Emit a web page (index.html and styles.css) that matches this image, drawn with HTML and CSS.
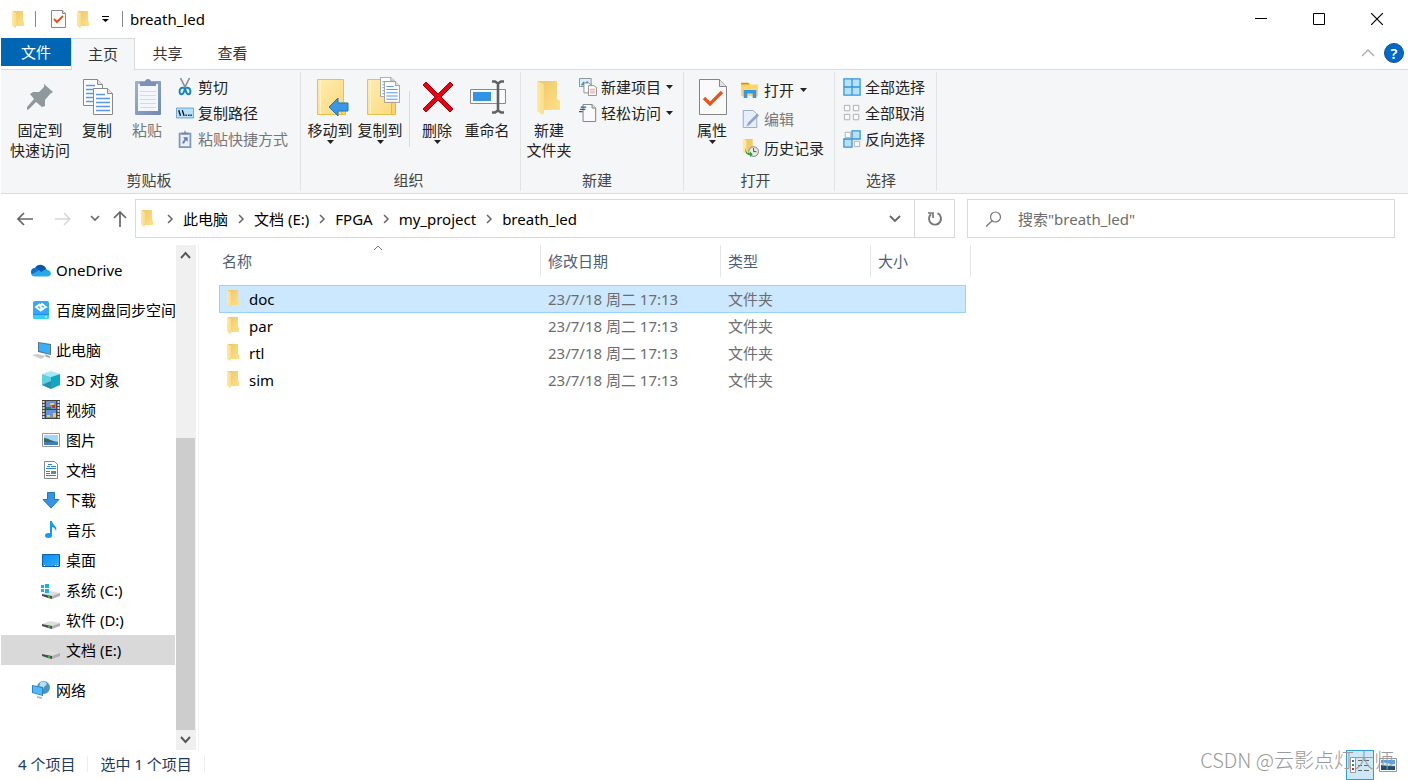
FILE: index.html
```html
<!DOCTYPE html>
<html lang="zh-CN">
<head>
<meta charset="utf-8">
<title>breath_led</title>
<link rel="stylesheet" href="styles.css">
</head>
<body>
<svg class="defs" aria-hidden="true">
  <defs>
    <linearGradient id="gFront" x1="0" x2="1"><stop offset="0" stop-color="#ffe9a6"/><stop offset="1" stop-color="#fbdc86"/></linearGradient>
    <linearGradient id="gBack" x1="0" x2="1" y2="1"><stop offset="0" stop-color="#eec766"/><stop offset="1" stop-color="#ffe08a"/></linearGradient>
    <linearGradient id="gSky" x1="0" x2="1" y2="1"><stop offset="0" stop-color="#0d8bf0"/><stop offset="1" stop-color="#31b1ff"/></linearGradient>
    <linearGradient id="gBook" x1="0" x2="1" y2="1"><stop offset="0" stop-color="#ffedb0"/><stop offset="1" stop-color="#fbd97c"/></linearGradient>
    <linearGradient id="gClip" x1="0" x2="1" y2="1"><stop offset="0" stop-color="#9fb2d3"/><stop offset="1" stop-color="#7288b0"/></linearGradient>
  </defs>
  <symbol id="folder" viewBox="0 0 13 17">
    <path d="M1 0h10v10l1 1v4H2z" fill="url(#gBack)"/>
    <path d="M0 0l4 2v14l-1 1-3-2z" fill="url(#gFront)"/>
  </symbol>
  <symbol id="check" viewBox="0 0 16 20">
    <path d="M.5 1.500h11l3 3v14H.5z" fill="#fafafa" stroke="#8a8a8a"/>
    <path d="M11.500 1.500v3h3" fill="#ddd" stroke="#8a8a8a"/>
    <path d="M3 10l3 3 6-6" fill="none" stroke="#e8541a" stroke-width="2"/>
  </symbol>
  <symbol id="crumb" viewBox="0 0 8 10"><path d="M2 1l4 4-4 4" fill="none" stroke="#666" stroke-width="1.500"/></symbol>
  <symbol id="caret" viewBox="0 0 7 4"><path d="M0 0h7L3.500 4z" fill="#222"/></symbol>
  <symbol id="drive" viewBox="0 0 20 20">
    <path d="M1 14l8-3 10 2-8 3z" fill="#dedede"/>
    <path d="M1 14l10 2v3l-4-1-6-2z" fill="#4d4d4d"/>
    <path d="M11 16l8-3v3l-8 3z" fill="#b0b0b0"/>
    <path d="M7 16l2 .5v1.500l-2-.5z" fill="#2be02b"/>
  </symbol>
  <symbol id="sheet" viewBox="0 0 20 27">
    <path d="M.5.5h14l5 5v21H.5z" fill="#fdfdfd" stroke="#888"/>
    <path d="M14.500.5v5h5" fill="#e6e6e6" stroke="#888"/>
    <path d="M3 6.500h9M3 10.500h14M3 14.500h14M3 18.500h14M3 22.500h14" stroke="#5a98ee" stroke-width="1.300"/>
  </symbol>
  <symbol id="book" viewBox="0 0 30 38">
    <path d="M1.500 1.500h26v35h-26z" fill="url(#gBook)" stroke="#e8c04c"/>
    <path d="M4.500 2v34" stroke="#fff3c4"/>
    <path d="M25.500 36.500v-11l2-2 2 2v11z" fill="#f9d467" stroke="#e8b93c"/>
  </symbol>
</svg>

<div class="window">
  <header class="titlebar">
    <svg class="folder-icon" viewBox="0 0 13 17"><use href="#folder"/></svg>
    <span class="bar"></span>
    <button class="quick" aria-label="属性"><svg width="16" height="20"><use href="#check"/></svg></button>
    <button class="quick" aria-label="新建文件夹"><svg class="folder-icon"><use href="#folder"/></svg></button>
    <button class="quick customize" aria-label="自定义"><svg width="7" height="7" viewBox="0 0 7 7"><path d="M0 0h7v1H0zM0 3h7L3.500 6z"/></svg></button>
    <span class="bar"></span>
    <h1 class="title">breath_led</h1>
    <div class="window-buttons">
      <button aria-label="最小化"><svg width="12" height="12"><path d="M0 5.500h12" stroke="#000"/></svg></button>
      <button aria-label="最大化"><svg width="12" height="12"><path d="M.5.5h11v11H.5z" fill="none" stroke="#000"/></svg></button>
      <button aria-label="关闭"><svg width="12" height="12"><path d="M0 0l12 12M12 0L0 12" stroke="#000" stroke-width="1.200"/></svg></button>
    </div>
  </header>

  <nav class="tabs">
    <button class="tab file">文件</button>
    <button class="tab active">主页</button>
    <button class="tab">共享</button>
    <button class="tab">查看</button>
    <div class="tab-tools">
      <button aria-label="折叠功能区"><svg width="14" height="8"><path d="M1 7l6-6 6 6" fill="none" stroke="#aaa" stroke-width="1.300"/></svg></button>
      <button class="help" aria-label="帮助">?</button>
    </div>
  </nav>

  <section class="ribbon">
    <div class="group clipboard">
      <div class="tools">
        <button class="big pin">
          <svg class="big-icon" viewBox="0 0 40 40"><path d="M24 7l9 8-3 2-5 6 0 6-3 1-6-5-7 7-2 1 0-3 7-8-4-5 3-2 6 0 5-5z" fill="#8f989d"/></svg>
          <span>固定到<br>快速访问</span>
        </button>
        <button class="big">
          <svg class="big-icon" viewBox="0 0 40 40"><use href="#sheet" x="6" y="2" width="20" height="27"/><use href="#sheet" x="16" y="11" width="20" height="27"/></svg>
          <span>复制</span>
        </button>
        <button class="big" disabled>
          <svg class="big-icon" viewBox="0 0 40 40"><rect x="8" y="4" width="26" height="34" rx="1" fill="url(#gClip)"/><path d="M11 7h20v27H11z" fill="#f3f7fd"/><path d="M13 14.500h16M13 18.500h16M13 22.500h16M13 26.500h16M13 30.500h16" stroke="#cbdcf2"/><path d="M13 5h5c0-4 6-4 6 0h5v4H13z" fill="#7c91b8"/></svg>
          <span>粘贴</span>
        </button>
        <div class="small-list">
          <button class="small"><svg class="small-icon" viewBox="0 0 20 20"><path d="M5 0l6 12M15 0L9 12" stroke="#8b8f94" stroke-width="1.800"/><path d="M9 11c-4-1-5 2-5 4s1 3 2 3c3 0 3-3 4-7 1 4 1 7 4 7 1 0 2-1 2-3s-1-5-5-4" fill="none" stroke="#1684cb" stroke-width="2.200"/></svg>剪切</button>
          <button class="small"><svg class="small-icon" viewBox="0 0 20 20"><path d="M.5 4.500h19v11H.5z" fill="#b4e1fa" stroke="#5c9fcd"/><path d="M3 7l2 6M7 7l2 6M10.500 12.500H12M13.500 12.500H15M16 12.500h1.500" stroke="#111" stroke-width="1.500"/></svg>复制路径</button>
          <button class="small" disabled><svg class="small-icon" viewBox="0 0 20 20"><path d="M3 3h14v17H3z" fill="#8297bd"/><path d="M5 5h10v13H5z" fill="#eaf1fb"/><path d="M6 3h3l1-3 1 3h3v2H6z" fill="#7086ae"/><path d="M8 8h5v5l-2-1.500L9 15H7c0-2 1-3 2.500-4.500z" fill="#5f7fae"/></svg>粘贴快捷方式</button>
        </div>
      </div>
      <div class="group-label">剪贴板</div>
    </div>

    <div class="group organize">
      <div class="tools">
        <button class="big"><svg class="big-icon" viewBox="0 0 40 40"><use href="#book" x="6" y="1" width="30" height="38"/><path d="M19 30l9-9v5h10v8H28v5z" fill="#3a97e6" stroke="#1c76c2"/></svg><span>移动到</span><svg class="caret"><use href="#caret"/></svg></button>
        <button class="big"><svg class="big-icon" viewBox="0 0 40 40"><use href="#book" x="6" y="1" width="30" height="38"/><use href="#sheet" x="20" y="0" width="15" height="20"/><use href="#sheet" x="24" y="4" width="16" height="22"/></svg><span>复制到</span><svg class="caret"><use href="#caret"/></svg></button>
        <span class="divider"></span>
        <button class="big"><svg class="big-icon" viewBox="0 0 40 40"><path d="M6 8l3-3 12 12L33 5l3 3-12 12 12 12-3 3-12-12L9 35l-3-3 12-12z" fill="#e8000e" stroke="#b1000b"/></svg><span>删除</span><svg class="caret"><use href="#caret"/></svg></button>
        <button class="big"><svg class="big-icon" viewBox="0 0 40 40"><path d="M3.500 12.500h35v14h-35z" fill="#fafafa" stroke="#8b8b8b"/><path d="M6 15h18v9H6z" fill="#3393e6"/><path d="M25 4.500h3l3 2 3-2h3M25 35.500h3l3-2 3 2h3M31 6v28" fill="none" stroke="#616161" stroke-width="2.600"/></svg><span>重命名</span></button>
      </div>
      <div class="group-label">组织</div>
    </div>

    <div class="group create">
      <div class="tools">
        <button class="big wide"><svg class="big-icon" viewBox="0 0 40 40"><path d="M9 4h19v18l3 2v9H12z" fill="url(#gBack)"/><path d="M8 4l7 3v28l-1 3-6-4z" fill="url(#gFront)"/></svg><span>新建<br>文件夹</span></button>
        <div class="small-list">
          <button class="small"><svg class="small-icon" viewBox="0 0 20 20"><path d="M.5.5h13v9H.5z" fill="#d9f0fc" stroke="#7d8a92"/><path d="M2 8l3-4 2 2 2-3 3 5z" fill="#318ccb"/><path d="M5.500 5.500h5l3 2v9h-8z" fill="#fff" stroke="#888"/><path d="M10.500 8.500h6l3 2v9h-9z" fill="#fff" stroke="#888"/><path d="M12 12.500h6M12 14.500h6M12 16.500h6" stroke="#ef9292"/></svg>新建项目<svg class="caret inline"><use href="#caret"/></svg></button>
          <button class="small"><svg class="small-icon" viewBox="0 0 20 20"><path d="M4.500.5h10l4 4v15h-14z" fill="#fafafa" stroke="#777"/><path d="M14.500.5v4h4" fill="#e6e6e6" stroke="#777"/><path d="M2 3.500h6M1 6h6M0 8.500h4" stroke="#1267b1" stroke-width="1.300"/></svg>轻松访问<svg class="caret inline"><use href="#caret"/></svg></button>
        </div>
      </div>
      <div class="group-label">新建</div>
    </div>

    <div class="group open">
      <div class="tools">
        <button class="big"><svg class="big-icon" viewBox="0 0 40 40"><path d="M7.500 2.500h20l7 7v28h-27z" fill="#fafafa" stroke="#858585"/><path d="M27.500 2.500v7h7" fill="#e2e2e2" stroke="#858585"/><path d="M12 21l6 6 12-12" fill="none" stroke="#e8541a" stroke-width="3.200"/></svg><span>属性</span><svg class="caret"><use href="#caret"/></svg></button>
        <div class="small-list loose">
          <button class="small"><svg class="small-icon" viewBox="0 0 20 20"><path d="M0 3h9l1 1h9v13H0z" fill="#ffd66a"/><path d="M0 2h8l2 2H0z" fill="#d9920a"/><path d="M3 19v-9h14v9h-4v-5H7v5z" fill="#3298e8"/></svg>打开<svg class="caret inline"><use href="#caret"/></svg></button>
          <button class="small" disabled><svg class="small-icon" viewBox="0 0 20 20"><path d="M2.500.5h11l4 4v15h-15z" fill="#e5eefa" stroke="#92a5c4"/><path d="M18 4L8 14l-2 4 3-1L20 6z" fill="#8fa5c8"/></svg>编辑</button>
          <button class="small"><svg class="small-icon" viewBox="0 0 20 20"><path d="M4 0h9v14H4z" fill="#f1cb68"/><path d="M2 0l4 2v15l-4-2z" fill="#ffe9a0"/><circle cx="14" cy="14" r="5.400" fill="#e8e8e8" stroke="#777"/><path d="M14 10v4h3" fill="none" stroke="#444"/><path d="M5 10c0 4 2 6 5 6v-2l3 3-3 3v-2c-4 0-6-4-5-8z" fill="#27a02d"/></svg>历史记录</button>
        </div>
      </div>
      <div class="group-label">打开</div>
    </div>

    <div class="group select">
      <div class="tools">
        <div class="small-list">
          <button class="small"><svg class="small-icon" viewBox="0 0 20 20"><g fill="#b7e1fb" stroke="#2f95df" stroke-width="1.400"><path d="M1 1h9v9H1zM10 1h9v9h-9zM1 10h9v9H1zM10 10h9v9h-9z"/></g></svg>全部选择</button>
          <button class="small"><svg class="small-icon" viewBox="0 0 20 20"><path d="M1.500 1.500h6v6h-6zM11.500 1.500h6v6h-6zM1.500 11.500h6v6h-6zM11.500 11.500h6v6h-6z" fill="#fafafa" stroke="#aaa"/></svg>全部取消</button>
          <button class="small"><svg class="small-icon" viewBox="0 0 20 20"><path d="M2.500 2.500h6v6h-6zM12.500 12.500h6v6h-6z" fill="#fafafa" stroke="#aaa"/><path d="M10 1h9v9h-9zM1 10h9v9H1z" fill="#b7e1fb" stroke="#2f95df" stroke-width="1.400"/></svg>反向选择</button>
        </div>
      </div>
      <div class="group-label">选择</div>
    </div>
  </section>

  <div class="navbar">
    <div class="history">
      <button aria-label="后退"><svg width="16" height="14"><path d="M1 7h15M7 1L1 7l6 6" fill="none" stroke="#666" stroke-width="1.700"/></svg></button>
      <button aria-label="前进"><svg width="16" height="14"><path d="M0 7h15M9 1l6 6-6 6" fill="none" stroke="#d6d6d6" stroke-width="1.500"/></svg></button>
      <button class="narrow" aria-label="最近"><svg width="10" height="7"><path d="M1 1l4 4 4-4" fill="none" stroke="#666" stroke-width="1.600"/></svg></button>
      <button class="narrow" aria-label="上移"><svg width="14" height="16"><path d="M7 1v15M1 7l6-6 6 6" fill="none" stroke="#666" stroke-width="1.700"/></svg></button>
    </div>
    <div class="address">
      <svg class="folder-icon"><use href="#folder"/></svg>
      <svg class="crumb"><use href="#crumb"/></svg><a href="#">此电脑</a>
      <svg class="crumb"><use href="#crumb"/></svg><a href="#">文档 (E:)</a>
      <svg class="crumb"><use href="#crumb"/></svg><a href="#">FPGA</a>
      <svg class="crumb"><use href="#crumb"/></svg><a href="#">my_project</a>
      <svg class="crumb"><use href="#crumb"/></svg><a href="#">breath_led</a>
      <button class="drop" aria-label="以前的位置"><svg width="12" height="8"><path d="M1 1l5 5 5-5" fill="none" stroke="#666" stroke-width="1.800"/></svg></button>
      <button class="refresh" aria-label="刷新"><svg width="16" height="16"><path d="M10.500 2.200A6 6 0 1 1 4 3.200" fill="none" stroke="#777" stroke-width="1.900"/><path d="M1 2h5v5" fill="none" stroke="#777" stroke-width="1.700"/></svg></button>
    </div>
    <label class="search">
      <svg width="17" height="16"><circle cx="10.500" cy="6" r="5" fill="none" stroke="#777" stroke-width="1.200"/><path d="M7 10l-6 5.500" stroke="#777" stroke-width="1.300"/></svg>
      <input type="text" placeholder='搜索"breath_led"' aria-label="搜索">
    </label>
  </div>

  <main class="content">
    <aside class="tree">
      <a class="node" href="#"><svg class="node-icon" viewBox="0 0 20 20"><path d="M4 16a4 4 0 0 1 0-8 6 6 0 0 1 11 1 4 4 0 0 1 1 7z" fill="#0f6fc9"/><path d="M11 8.500c2-1 4 0 4.500 1.500 4 0 5 3 4 5-1 1-2 1.500-3 1.500H4c-2 0-3-1-3.500-2z" fill="#28a8ea"/><path d="M5 7a6 6 0 0 1 10 2l-5 3z" fill="#0b57ab"/></svg>OneDrive</a>
      <a class="node" href="#"><svg class="node-icon" viewBox="0 0 20 20"><rect x="2" y="1" width="16" height="18" rx="2" fill="#35a8fb"/><path d="M2 15h16v2a2 2 0 0 1-2 2H4a2 2 0 0 1-2-2z" fill="#35d0fb"/><path d="M2 14.500h16" stroke="#1e8fe9"/><path d="M14 17h2" stroke="#fff"/><path d="M9 4L5 7l4 3 2-2M11 9l4-2-4-3-2 2 3 3-3 2" fill="none" stroke="#fff" stroke-width="1.800"/></svg>百度网盘同步空间</a>
      <a class="node" href="#"><svg class="node-icon" viewBox="0 0 20 20"><path d="M7 2l13 2v11L7 12z" fill="#5a7184"/><path d="M8 3l11 2v9L8 11z" fill="#35b0fa"/><path d="M1 15l5-1 9 2-5 3z" fill="#c9ced2"/><path d="M14 14l5 2 0 2-4-1z" fill="#a8afb4"/></svg>此电脑</a>
      <a class="node child" href="#"><svg class="node-icon" viewBox="0 0 20 20"><path d="M10 1l9 3-9 3-9-3z" fill="#a2eaf2"/><path d="M1 4l9 3v12l-9-4z" fill="#5fd0df"/><path d="M19 4l-9 3v12l9-4z" fill="#12a5c4"/><path d="M1 15l9-4v8z" fill="#278fa8"/></svg>3D 对象</a>
      <a class="node child" href="#"><svg class="node-icon" viewBox="0 0 20 20"><path d="M1 0h18v19H1z" fill="#444"/><path d="M2.500 1v18M17.500 1v18" stroke="#ddd" stroke-width="2" stroke-dasharray="2 1"/><path d="M5 1h10v8H5zM5 10h10v8H5z" fill="#6a91de"/><path d="M9 3h4v2H9zM6 15h3v2H6zM12 13h3v4h-3z" fill="#f6cf2f"/><path d="M11 5h3v3h-3z" fill="#d8332b"/><path d="M5 7h5v2H5z" fill="#26864a"/></svg>视频</a>
      <a class="node child" href="#"><svg class="node-icon" viewBox="0 0 20 20"><path d="M1.500 3.500h17v13h-17z" fill="#fff" stroke="#999"/><path d="M3 5h14v10H3z" fill="#a4d6f6"/><path d="M3 8c5 0 6 3 14 4v3H3z" fill="#376a64"/><path d="M3 12h14v3H3z" fill="#3e7fb5"/></svg>图片</a>
      <a class="node child" href="#"><svg class="node-icon" viewBox="0 0 20 20"><path d="M3.500 1.500h10l3 3v14h-13z" fill="#fff" stroke="#888"/><path d="M7 4.500h4M6 6.500h3M10 6.500h5M5 8.500h10M5 11.500h4M5 13.500h4M5 15.500h10" stroke="#238bcb"/><path d="M10 11h5v3h-5z" fill="#6b8794"/></svg>文档</a>
      <a class="node child" href="#"><svg class="node-icon" viewBox="0 0 20 20"><path d="M6.500 2.500h7v7h4.500L10 18 2 9.500h4.500z" fill="#3393e7" stroke="#2178c7"/></svg>下载</a>
      <a class="node child" href="#"><svg class="node-icon" viewBox="0 0 20 20"><ellipse cx="7.500" cy="15.500" rx="3.500" ry="2.500" fill="#139af4"/><path d="M9 1h2c0 4 6 5 4 10-1-3-3-4-4-4v9H9z" fill="#139af4"/></svg>音乐</a>
      <a class="node child" href="#"><svg class="node-icon" viewBox="0 0 20 20"><path d="M1.500 4.500h17v12h-17z" fill="url(#gSky)" stroke="#0763ac"/><path d="M3 15.500h1M14 15.500h1M16 15.500h1" stroke="#fff"/></svg>桌面</a>
      <a class="node child" href="#"><svg class="node-icon" viewBox="0 0 20 20"><use href="#drive" width="20" height="20"/><path d="M0 5h3v3H0zM4 4h4v4H4zM0 9h3v3H0zM4 9h4v4H4z" fill="#11b2ed"/></svg>系统 (C:)</a>
      <a class="node child" href="#"><svg class="node-icon"><use href="#drive"/></svg>软件 (D:)</a>
      <a class="node child current" href="#"><svg class="node-icon"><use href="#drive"/></svg>文档 (E:)</a>
      <a class="node" href="#"><svg class="node-icon" viewBox="0 0 20 20"><circle cx="12.500" cy="7.500" r="6.500" fill="#4b94bd"/><path d="M9 3c3-3 6-1 7 1l-3 3-2 4-3-3z" fill="#b9e0ef"/><path d="M1 5l11 2v9L1 13z" fill="#2785ca"/><path d="M2 6l9 2v7l-9-2.500z" fill="#50b9f6"/><path d="M6 16l5 1v2l-5-1z" fill="#b5bec5"/></svg>网络</a>
    </aside>
    <div class="scrollbar">
      <button aria-label="向上滚动"><svg width="11" height="8"><path d="M1 7l4.500-5L10 7" fill="none" stroke="#555" stroke-width="1.900"/></svg></button>
      <div class="track"></div>
      <div class="thumb"></div>
      <button aria-label="向下滚动"><svg width="11" height="8"><path d="M1 1l4.500 5L10 1" fill="none" stroke="#555" stroke-width="1.900"/></svg></button>
    </div>
    <section class="files">
      <table class="list">
        <colgroup><col class="c-name"><col class="c-date"><col class="c-type"><col class="c-size"></colgroup>
        <thead>
          <tr><th>名称<svg class="sort" width="10" height="6"><path d="M1 5l4-4 4 4" fill="none" stroke="#777"/></svg></th><th>修改日期</th><th>类型</th><th>大小</th></tr>
        </thead>
        <tbody>
          <tr class="selected"><td><span class="name"><svg class="folder-icon"><use href="#folder"/></svg>doc</span></td><td>23/7/18 周二 17:13</td><td>文件夹</td><td><div class="row-end"></div></td></tr>
          <tr><td><span class="name"><svg class="folder-icon"><use href="#folder"/></svg>par</span></td><td>23/7/18 周二 17:13</td><td>文件夹</td><td></td></tr>
          <tr><td><span class="name"><svg class="folder-icon"><use href="#folder"/></svg>rtl</span></td><td>23/7/18 周二 17:13</td><td>文件夹</td><td></td></tr>
          <tr><td><span class="name"><svg class="folder-icon"><use href="#folder"/></svg>sim</span></td><td>23/7/18 周二 17:13</td><td>文件夹</td><td></td></tr>
        </tbody>
      </table>
    </section>
  </main>

  <footer class="status">
    <span class="count">4 个项目</span>
    <span class="count">选中 1 个项目</span>
    <div class="views">
      <button class="view on" aria-label="详细信息"><svg width="20" height="16"><path d="M.5.5h5v15h-5z" fill="#fff" stroke="#999"/><path d="M2 3h2v2H2z" fill="#3076ba"/><path d="M2 7h2v2H2z" fill="#3a963e"/><path d="M2 11h2v2H2z" fill="#d92020"/><path d="M8 3.500h4M14 3.500h5M8 8.500h4M14 8.500h5M8 13.500h4M14 13.500h5" stroke="#666"/></svg></button>
      <button class="view" aria-label="大图标"><svg width="18" height="14"><path d="M.5.5h17v13H.5z" fill="#fff" stroke="#999"/><path d="M2 2h14v10H2z" fill="#5ca0eb"/><path d="M2 5c5-2 8 2 14 1v2H2z" fill="#cfe7f7"/><path d="M2 7c4 0 8 2 14 1v4H2z" fill="#254f68"/></svg></button>
    </div>
    <span class="watermark">CSDN @云影点灯大师</span>
  </footer>
</div>
</body>
</html>
```

FILE: styles.css
```css
* { box-sizing: border-box; }

body {
  margin: 0;
  background: #fff;
  color: #000;
  font: 15px/20px "Noto Sans", "Noto Sans CJK SC", sans-serif;
}

button {
  display: flex;
  align-items: center;
  justify-content: center;
  padding: 0;
  border: 0;
  background: none;
  color: inherit;
  font: inherit;
}

a { color: inherit; text-decoration: none; }
svg { display: block; flex: none; }
.defs { position: absolute; width: 0; height: 0; }
.folder-icon { width: 13px; height: 17px; }

.window {
  display: flex;
  flex-direction: column;
  min-height: 100vh;
  padding-left: 1px;
}

/* Title bar */
.titlebar { display: flex; align-items: center; height: 38px; padding-left: 11px; }
.bar { width: 1px; height: 16px; margin-left: 10px; background: #888; }
.quick { margin-left: 10px; }
.bar + .quick { margin-left: 15px; }
.customize { margin-left: 12px; }
.customize + .bar { margin-left: 13px; }
.title { margin: 0 auto 0 7px; font-size: 15px; font-weight: 400; }
.window-buttons { display: flex; padding-right: 2px; }
.window-buttons button { width: 58px; height: 38px; }

/* Tabs */
.tabs { display: flex; height: 32px; border-bottom: 1px solid #dadbdc; color: #333; }
.tab { width: 65px; height: 31px; padding-bottom: 2px; }
.file { width: 70px; height: 28px; padding: 0; background: #0066b4; color: #fff; }
.active { width: 64px; height: 32px; border: 1px solid #dadbdc; border-bottom: 0; background: #f5f6f7; }
.tab-tools { display: flex; align-items: center; gap: 9px; margin-left: auto; padding: 0 4px 2px 0; }
.help {
  width: 20px;
  height: 20px;
  border: 1px solid #1a4f86;
  border-radius: 50%;
  background: #0069cb;
  color: #fff;
  font-weight: 600;
}

/* Ribbon */
.ribbon {
  display: flex;
  height: 124px;
  padding: 2px 0;
  border-bottom: 1px solid #dadbdc;
  background: #f5f6f7;
  color: #222;
}
.group { display: flex; flex-direction: column; justify-content: space-between; border-right: 1px solid #e2e3e4; }
.tools { display: flex; align-items: flex-start; }
.group-label { padding-bottom: 1px; color: #444; text-align: center; }
.clipboard { padding: 0 12px 0 9px; }
.organize { padding: 0 8px 0 4px; }
.create { padding-right: 10px; }
.open { padding: 0 10px 0 3px; }
.select { padding: 0 11px 0 2px; }
.big { flex-direction: column; justify-content: flex-start; width: 50px; padding-top: 5px; white-space: nowrap; }
.pin { width: 60px; margin-right: 2px; }
.wide { width: 56px; }
.big-icon { width: 40px; height: 40px; margin-bottom: 3px; }
.caret { width: 7px; height: 4px; }
.inline { margin-left: 1px; }
.divider { width: 1px; height: 56px; margin: 19px 2px 0 4px; background: #dadbdc; }
.small-list { display: flex; flex-direction: column; align-items: flex-start; padding: 2px 0 0 4px; }
.small { gap: 4px; height: 26px; white-space: nowrap; }
.small-icon { width: 18px; height: 18px; }
.loose { padding-top: 3px; }
.loose .small { gap: 5px; height: 29px; }
.create .small-list { padding-left: 2px; }
.select .small-list { padding-left: 6px; }
.small:disabled, .big:disabled { color: #777; }

/* Navigation */
.navbar { display: flex; align-items: center; height: 51px; padding: 0 13px 2px 5px; }
.history { display: flex; align-items: center; width: 129px; }
.history button { width: 38px; height: 38px; }
.history .narrow { width: 25px; }
.address, .search { display: flex; align-items: center; height: 39px; border: 1px solid #d9d9d9; }
.address { flex: 813 1 0; padding-left: 5px; white-space: nowrap; }
.crumb { width: 8px; height: 10px; margin: 0 9px; }
.folder-icon + .crumb { margin: 0 9px 0 12px; }
.drop { width: 38px; height: 37px; margin-left: auto; }
.refresh { width: 40px; height: 37px; border-left: 1px solid #d9d9d9; }
.search { flex: 409 1 0; gap: 16px; margin-left: 12px; padding-left: 17px; }
.search input { flex: 1; min-width: 0; padding: 0; border: 0; outline: 0; background: none; font: inherit; }
.search input::placeholder { color: #6d6d6d; opacity: 1; }

/* Content */
.content { display: flex; flex: 1; }
.tree { width: 174px; overflow: hidden; }
.node {
  display: flex;
  align-items: center;
  gap: 5px;
  height: 30px;
  margin-top: 10px;
  padding-left: 30px;
  white-space: nowrap;
}
.node-icon { width: 20px; height: 20px; }
.child { margin-top: 0; padding-left: 40px; }
.current { background: #d9d9d9; }
.scrollbar { display: flex; flex-direction: column; width: 20px; margin-left: 1px; background: #f0f0f0; }
.scrollbar button { height: 20px; padding-right: 1px; }
.track { flex: 173; }
.thumb { flex: 291; margin-right: 1px; background: #cdcdcd; }

/* File list */
.files { flex: 1; margin-left: 2px; padding-left: 20px; border-left: 1px solid #f2f2f2; }
.list { width: 752px; table-layout: fixed; border-spacing: 0; }
.c-name { width: 322px; }
.c-date { width: 180px; }
.c-type { width: 150px; }
.c-size { width: 100px; }
.list th {
  position: relative;
  height: 32px;
  padding: 0 0 0 7px;
  border-right: 1px solid #e5e5e5;
  color: #4c607a;
  font-weight: 400;
  text-align: left;
}
.list th:first-child { padding-left: 3px; }
.sort { position: absolute; top: 0; left: 154px; }
.list tbody::before { content: ""; display: block; height: 8px; }
.list td { height: 27px; padding: 0 0 1px 7px; color: #6d6d6d; }
.list td:first-child { padding-left: 8px; color: #000; }
.name { display: flex; align-items: center; gap: 9px; }
.name .folder-icon { margin-bottom: 2px; }
.selected td { height: 28px; padding-bottom: 0; border: solid #99d1ff; border-width: 1px 0; background: #cce8ff; }
.selected td:first-child { padding-left: 7px; border-left-width: 1px; }
.selected td:last-child { padding: 0 5px 0 0; border: 0; background: none; }
.row-end { height: 28px; border: solid #99d1ff; border-width: 1px 1px 1px 0; background: #cce8ff; }

/* Status bar */
.status { display: flex; align-items: center; position: relative; height: 30px; padding-left: 17px; color: #1e395b; }
.count { margin: 0 12px 2px 0; padding-right: 12px; border-right: 1px solid #eee; line-height: 16px; }
.views { display: flex; margin-left: auto; padding-right: 6px; }
.view { width: 28px; height: 30px; }
.on { border: 1px solid #2c9fd8; background: #cce8f6; }
.watermark {
  position: absolute;
  right: 14px;
  bottom: 8px;
  color: #9a9a9a;
  font-family: "Noto Sans CJK SC", sans-serif;
  font-size: 20px;
  font-weight: 300;
  line-height: 24px;
}
```
